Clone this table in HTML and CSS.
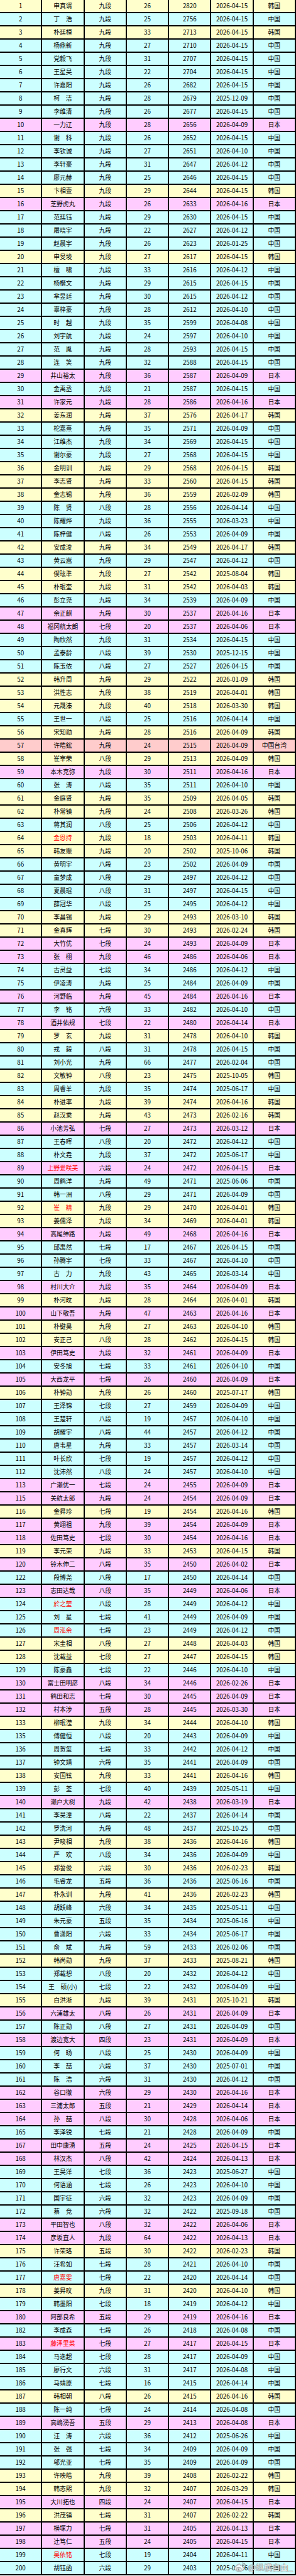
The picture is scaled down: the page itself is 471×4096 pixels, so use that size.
FILE: index.html
```html
<!DOCTYPE html>
<html lang="zh-CN">
<head>
<meta charset="utf-8">
<title>围棋等级分排名</title>
<link rel="stylesheet" href="styles.css">
</head>
<body>
<div class="page">
<table class="rank">
<tbody>
<tr class="k"><td>1</td><td>申真谞</td><td>九段</td><td>26</td><td>2820</td><td>2026-04-15</td><td>韩国</td></tr>
<tr class="c"><td>2</td><td>丁　浩</td><td>九段</td><td>25</td><td>2756</td><td>2026-04-15</td><td>中国</td></tr>
<tr class="k"><td>3</td><td>朴廷桓</td><td>九段</td><td>33</td><td>2713</td><td>2026-04-15</td><td>韩国</td></tr>
<tr class="c"><td>4</td><td>杨鼎新</td><td>九段</td><td>27</td><td>2710</td><td>2026-04-15</td><td>中国</td></tr>
<tr class="c"><td>5</td><td>党毅飞</td><td>九段</td><td>31</td><td>2707</td><td>2026-04-15</td><td>中国</td></tr>
<tr class="c"><td>6</td><td>王星昊</td><td>九段</td><td>22</td><td>2704</td><td>2026-04-15</td><td>中国</td></tr>
<tr class="c"><td>7</td><td>许嘉阳</td><td>九段</td><td>26</td><td>2682</td><td>2026-04-15</td><td>中国</td></tr>
<tr class="c"><td>8</td><td>柯　洁</td><td>九段</td><td>28</td><td>2679</td><td>2025-12-09</td><td>中国</td></tr>
<tr class="c"><td>9</td><td>李维清</td><td>九段</td><td>26</td><td>2677</td><td>2026-04-15</td><td>中国</td></tr>
<tr class="j"><td>10</td><td>一力辽</td><td>九段</td><td>28</td><td>2656</td><td>2026-04-09</td><td>日本</td></tr>
<tr class="c"><td>11</td><td>谢　科</td><td>九段</td><td>26</td><td>2652</td><td>2026-04-15</td><td>中国</td></tr>
<tr class="c"><td>12</td><td>李钦诚</td><td>九段</td><td>27</td><td>2651</td><td>2026-04-10</td><td>中国</td></tr>
<tr class="c"><td>13</td><td>李轩豪</td><td>九段</td><td>31</td><td>2647</td><td>2026-04-12</td><td>中国</td></tr>
<tr class="c"><td>14</td><td>廖元赫</td><td>九段</td><td>25</td><td>2646</td><td>2026-04-15</td><td>中国</td></tr>
<tr class="k"><td>15</td><td>卞相壹</td><td>九段</td><td>29</td><td>2644</td><td>2026-04-15</td><td>韩国</td></tr>
<tr class="j"><td>16</td><td>芝野虎丸</td><td>九段</td><td>26</td><td>2633</td><td>2026-04-16</td><td>日本</td></tr>
<tr class="c"><td>17</td><td>范廷钰</td><td>九段</td><td>29</td><td>2630</td><td>2026-04-15</td><td>中国</td></tr>
<tr class="c"><td>18</td><td>屠晓宇</td><td>九段</td><td>22</td><td>2627</td><td>2026-04-12</td><td>中国</td></tr>
<tr class="c"><td>19</td><td>赵晨宇</td><td>九段</td><td>26</td><td>2623</td><td>2026-01-25</td><td>中国</td></tr>
<tr class="k"><td>20</td><td>申旻埈</td><td>九段</td><td>27</td><td>2617</td><td>2026-04-15</td><td>韩国</td></tr>
<tr class="c"><td>21</td><td>檀　啸</td><td>九段</td><td>33</td><td>2616</td><td>2026-04-12</td><td>中国</td></tr>
<tr class="c"><td>22</td><td>杨楷文</td><td>九段</td><td>29</td><td>2615</td><td>2026-04-15</td><td>中国</td></tr>
<tr class="c"><td>23</td><td>芈昱廷</td><td>九段</td><td>30</td><td>2615</td><td>2026-04-12</td><td>中国</td></tr>
<tr class="c"><td>24</td><td>辜梓豪</td><td>九段</td><td>28</td><td>2612</td><td>2026-04-10</td><td>中国</td></tr>
<tr class="c"><td>25</td><td>时　越</td><td>九段</td><td>35</td><td>2599</td><td>2026-04-08</td><td>中国</td></tr>
<tr class="c"><td>26</td><td>刘宇航</td><td>九段</td><td>24</td><td>2597</td><td>2026-04-10</td><td>中国</td></tr>
<tr class="c"><td>27</td><td>范　胤</td><td>九段</td><td>28</td><td>2593</td><td>2026-04-15</td><td>中国</td></tr>
<tr class="c"><td>28</td><td>连　笑</td><td>九段</td><td>32</td><td>2588</td><td>2026-04-15</td><td>中国</td></tr>
<tr class="j"><td>29</td><td>井山裕太</td><td>九段</td><td>36</td><td>2587</td><td>2026-04-09</td><td>日本</td></tr>
<tr class="c"><td>30</td><td>金禹丞</td><td>九段</td><td>21</td><td>2587</td><td>2026-04-15</td><td>中国</td></tr>
<tr class="j"><td>31</td><td>许家元</td><td>九段</td><td>28</td><td>2586</td><td>2026-04-16</td><td>日本</td></tr>
<tr class="k"><td>32</td><td>姜东润</td><td>九段</td><td>37</td><td>2576</td><td>2026-04-17</td><td>韩国</td></tr>
<tr class="c"><td>33</td><td>柁嘉熹</td><td>九段</td><td>35</td><td>2571</td><td>2026-04-09</td><td>中国</td></tr>
<tr class="c"><td>34</td><td>江维杰</td><td>九段</td><td>34</td><td>2569</td><td>2026-04-15</td><td>中国</td></tr>
<tr class="c"><td>35</td><td>谢尔豪</td><td>九段</td><td>27</td><td>2568</td><td>2026-04-15</td><td>中国</td></tr>
<tr class="k"><td>36</td><td>金明训</td><td>九段</td><td>29</td><td>2568</td><td>2026-04-15</td><td>韩国</td></tr>
<tr class="k"><td>37</td><td>李志贤</td><td>九段</td><td>33</td><td>2560</td><td>2026-04-15</td><td>韩国</td></tr>
<tr class="k"><td>38</td><td>金志锡</td><td>九段</td><td>36</td><td>2559</td><td>2026-02-09</td><td>韩国</td></tr>
<tr class="c"><td>39</td><td>陈　贤</td><td>八段</td><td>28</td><td>2556</td><td>2026-04-14</td><td>中国</td></tr>
<tr class="c"><td>40</td><td>陈耀烨</td><td>九段</td><td>36</td><td>2555</td><td>2026-03-23</td><td>中国</td></tr>
<tr class="c"><td>41</td><td>陈梓健</td><td>八段</td><td>26</td><td>2553</td><td>2026-04-09</td><td>中国</td></tr>
<tr class="k"><td>42</td><td>安成浚</td><td>九段</td><td>34</td><td>2549</td><td>2026-04-17</td><td>韩国</td></tr>
<tr class="c"><td>43</td><td>黄云嵩</td><td>九段</td><td>29</td><td>2547</td><td>2026-04-12</td><td>中国</td></tr>
<tr class="k"><td>44</td><td>偰玹準</td><td>九段</td><td>27</td><td>2542</td><td>2025-08-04</td><td>韩国</td></tr>
<tr class="k"><td>45</td><td>朴珉奎</td><td>九段</td><td>31</td><td>2542</td><td>2026-04-03</td><td>韩国</td></tr>
<tr class="c"><td>46</td><td>彭立尧</td><td>九段</td><td>34</td><td>2539</td><td>2026-04-09</td><td>中国</td></tr>
<tr class="j"><td>47</td><td>余正麒</td><td>九段</td><td>30</td><td>2537</td><td>2026-04-16</td><td>日本</td></tr>
<tr class="j"><td>48</td><td>福冈航太朗</td><td>七段</td><td>20</td><td>2537</td><td>2026-04-06</td><td>日本</td></tr>
<tr class="c"><td>49</td><td>陶欣然</td><td>九段</td><td>31</td><td>2534</td><td>2026-04-15</td><td>中国</td></tr>
<tr class="c"><td>50</td><td>孟泰龄</td><td>八段</td><td>39</td><td>2530</td><td>2025-12-15</td><td>中国</td></tr>
<tr class="c"><td>51</td><td>陈玉侬</td><td>八段</td><td>27</td><td>2527</td><td>2026-04-15</td><td>中国</td></tr>
<tr class="k"><td>52</td><td>韩升周</td><td>九段</td><td>29</td><td>2522</td><td>2026-01-09</td><td>韩国</td></tr>
<tr class="k"><td>53</td><td>洪性志</td><td>九段</td><td>38</td><td>2519</td><td>2026-04-01</td><td>韩国</td></tr>
<tr class="k"><td>54</td><td>元晟溱</td><td>九段</td><td>40</td><td>2518</td><td>2026-03-30</td><td>韩国</td></tr>
<tr class="c"><td>55</td><td>王世一</td><td>八段</td><td>25</td><td>2516</td><td>2026-04-14</td><td>中国</td></tr>
<tr class="k"><td>56</td><td>宋知勋</td><td>九段</td><td>28</td><td>2516</td><td>2026-04-09</td><td>韩国</td></tr>
<tr class="t"><td>57</td><td>许皓鋐</td><td>九段</td><td>24</td><td>2515</td><td>2026-04-09</td><td>中国台湾</td></tr>
<tr class="k"><td>58</td><td>崔宰荣</td><td>八段</td><td>29</td><td>2513</td><td>2026-04-09</td><td>韩国</td></tr>
<tr class="j"><td>59</td><td>本木克弥</td><td>九段</td><td>30</td><td>2511</td><td>2026-04-16</td><td>日本</td></tr>
<tr class="c"><td>60</td><td>张　涛</td><td>八段</td><td>35</td><td>2511</td><td>2026-04-10</td><td>中国</td></tr>
<tr class="k"><td>61</td><td>金庭贤</td><td>九段</td><td>35</td><td>2509</td><td>2026-04-05</td><td>韩国</td></tr>
<tr class="k"><td>62</td><td>朴常镇</td><td>九段</td><td>24</td><td>2508</td><td>2026-03-26</td><td>韩国</td></tr>
<tr class="c"><td>63</td><td>蒋其润</td><td>八段</td><td>25</td><td>2506</td><td>2026-04-12</td><td>中国</td></tr>
<tr class="k"><td>64</td><td class="w">金恩持</td><td>九段</td><td>18</td><td>2503</td><td>2026-04-11</td><td>韩国</td></tr>
<tr class="k"><td>65</td><td>韩友赈</td><td>九段</td><td>20</td><td>2502</td><td>2025-10-06</td><td>韩国</td></tr>
<tr class="c"><td>66</td><td>黄明宇</td><td>八段</td><td>23</td><td>2502</td><td>2026-04-09</td><td>中国</td></tr>
<tr class="c"><td>67</td><td>童梦成</td><td>八段</td><td>29</td><td>2497</td><td>2026-04-12</td><td>中国</td></tr>
<tr class="c"><td>68</td><td>夏晨琨</td><td>八段</td><td>31</td><td>2497</td><td>2026-04-15</td><td>中国</td></tr>
<tr class="c"><td>69</td><td>薛冠华</td><td>八段</td><td>25</td><td>2495</td><td>2026-04-12</td><td>中国</td></tr>
<tr class="k"><td>70</td><td>李昌锡</td><td>九段</td><td>29</td><td>2493</td><td>2026-03-10</td><td>韩国</td></tr>
<tr class="k"><td>71</td><td>金真辉</td><td>七段</td><td>30</td><td>2493</td><td>2026-02-24</td><td>韩国</td></tr>
<tr class="j"><td>72</td><td>大竹优</td><td>七段</td><td>24</td><td>2493</td><td>2026-04-09</td><td>日本</td></tr>
<tr class="j"><td>73</td><td>张　栩</td><td>九段</td><td>46</td><td>2486</td><td>2026-04-06</td><td>日本</td></tr>
<tr class="c"><td>74</td><td>古灵益</td><td>七段</td><td>34</td><td>2486</td><td>2026-04-12</td><td>中国</td></tr>
<tr class="c"><td>75</td><td>伊凌涛</td><td>九段</td><td>25</td><td>2484</td><td>2026-04-09</td><td>中国</td></tr>
<tr class="j"><td>76</td><td>河野临</td><td>九段</td><td>45</td><td>2484</td><td>2026-04-16</td><td>日本</td></tr>
<tr class="c"><td>77</td><td>李　铭</td><td>六段</td><td>33</td><td>2482</td><td>2026-04-10</td><td>中国</td></tr>
<tr class="j"><td>78</td><td>酒井佑规</td><td>七段</td><td>22</td><td>2480</td><td>2026-04-14</td><td>日本</td></tr>
<tr class="k"><td>79</td><td>罗　玄</td><td>九段</td><td>31</td><td>2478</td><td>2026-04-10</td><td>韩国</td></tr>
<tr class="c"><td>80</td><td>戎　毅</td><td>八段</td><td>31</td><td>2478</td><td>2026-04-15</td><td>中国</td></tr>
<tr class="c"><td>81</td><td>刘小光</td><td>九段</td><td>66</td><td>2477</td><td>2026-02-04</td><td>中国</td></tr>
<tr class="k"><td>82</td><td>文敏钟</td><td>八段</td><td>23</td><td>2475</td><td>2025-10-05</td><td>韩国</td></tr>
<tr class="c"><td>83</td><td>周睿羊</td><td>九段</td><td>35</td><td>2474</td><td>2025-06-17</td><td>中国</td></tr>
<tr class="k"><td>84</td><td>朴进率</td><td>九段</td><td>39</td><td>2474</td><td>2026-04-16</td><td>韩国</td></tr>
<tr class="k"><td>85</td><td>赵汉乘</td><td>九段</td><td>43</td><td>2473</td><td>2026-02-16</td><td>韩国</td></tr>
<tr class="j"><td>86</td><td>小池芳弘</td><td>七段</td><td>27</td><td>2473</td><td>2026-03-12</td><td>日本</td></tr>
<tr class="c"><td>87</td><td>王春晖</td><td>八段</td><td>20</td><td>2472</td><td>2026-04-12</td><td>中国</td></tr>
<tr class="c"><td>88</td><td>朴文垚</td><td>九段</td><td>37</td><td>2472</td><td>2025-06-17</td><td>中国</td></tr>
<tr class="j"><td>89</td><td class="w">上野爱咲美</td><td>六段</td><td>24</td><td>2472</td><td>2026-04-15</td><td>日本</td></tr>
<tr class="c"><td>90</td><td>周鹤洋</td><td>九段</td><td>49</td><td>2471</td><td>2025-06-06</td><td>中国</td></tr>
<tr class="c"><td>91</td><td>韩一洲</td><td>八段</td><td>29</td><td>2471</td><td>2026-04-09</td><td>中国</td></tr>
<tr class="k"><td>92</td><td class="w">崔　精</td><td>九段</td><td>29</td><td>2470</td><td>2026-04-01</td><td>韩国</td></tr>
<tr class="k"><td>93</td><td>姜儒泽</td><td>九段</td><td>34</td><td>2469</td><td>2026-04-01</td><td>韩国</td></tr>
<tr class="j"><td>94</td><td>高尾绅路</td><td>九段</td><td>49</td><td>2468</td><td>2026-04-16</td><td>日本</td></tr>
<tr class="c"><td>95</td><td>邱禹然</td><td>七段</td><td>17</td><td>2467</td><td>2026-04-15</td><td>中国</td></tr>
<tr class="c"><td>96</td><td>孙腾宇</td><td>七段</td><td>33</td><td>2467</td><td>2026-04-10</td><td>中国</td></tr>
<tr class="c"><td>97</td><td>古　力</td><td>九段</td><td>43</td><td>2465</td><td>2026-03-14</td><td>中国</td></tr>
<tr class="j"><td>98</td><td>村川大介</td><td>九段</td><td>35</td><td>2464</td><td>2026-04-09</td><td>日本</td></tr>
<tr class="k"><td>99</td><td>朴河旼</td><td>九段</td><td>28</td><td>2464</td><td>2026-04-01</td><td>韩国</td></tr>
<tr class="j"><td>100</td><td>山下敬吾</td><td>九段</td><td>47</td><td>2463</td><td>2026-04-16</td><td>日本</td></tr>
<tr class="k"><td>101</td><td>朴键昊</td><td>九段</td><td>27</td><td>2463</td><td>2026-04-10</td><td>韩国</td></tr>
<tr class="k"><td>102</td><td>安正己</td><td>八段</td><td>28</td><td>2462</td><td>2026-04-15</td><td>韩国</td></tr>
<tr class="j"><td>103</td><td>伊田笃史</td><td>九段</td><td>32</td><td>2461</td><td>2026-04-09</td><td>日本</td></tr>
<tr class="c"><td>104</td><td>安冬旭</td><td>七段</td><td>33</td><td>2461</td><td>2026-04-10</td><td>中国</td></tr>
<tr class="j"><td>105</td><td>大西龙平</td><td>七段</td><td>26</td><td>2460</td><td>2026-04-09</td><td>日本</td></tr>
<tr class="k"><td>106</td><td>朴钟勋</td><td>九段</td><td>26</td><td>2460</td><td>2025-07-17</td><td>韩国</td></tr>
<tr class="c"><td>107</td><td>王泽锦</td><td>七段</td><td>27</td><td>2459</td><td>2026-04-09</td><td>中国</td></tr>
<tr class="c"><td>108</td><td>王楚轩</td><td>八段</td><td>19</td><td>2457</td><td>2026-04-10</td><td>中国</td></tr>
<tr class="c"><td>109</td><td>胡耀宇</td><td>八段</td><td>44</td><td>2457</td><td>2026-04-12</td><td>中国</td></tr>
<tr class="c"><td>110</td><td>唐韦星</td><td>九段</td><td>33</td><td>2457</td><td>2026-03-14</td><td>中国</td></tr>
<tr class="c"><td>111</td><td>叶长欣</td><td>七段</td><td>19</td><td>2457</td><td>2026-04-12</td><td>中国</td></tr>
<tr class="c"><td>112</td><td>沈沛然</td><td>八段</td><td>24</td><td>2457</td><td>2026-04-10</td><td>中国</td></tr>
<tr class="j"><td>113</td><td>广濑优一</td><td>七段</td><td>24</td><td>2455</td><td>2026-04-09</td><td>日本</td></tr>
<tr class="j"><td>115</td><td>关航太郎</td><td>九段</td><td>24</td><td>2454</td><td>2026-04-09</td><td>日本</td></tr>
<tr class="k"><td>116</td><td>金昇珍</td><td>七段</td><td>19</td><td>2454</td><td>2026-04-16</td><td>韩国</td></tr>
<tr class="j"><td>117</td><td>黄翊祖</td><td>九段</td><td>39</td><td>2454</td><td>2026-04-09</td><td>日本</td></tr>
<tr class="j"><td>118</td><td>佐田笃史</td><td>七段</td><td>30</td><td>2454</td><td>2026-04-16</td><td>日本</td></tr>
<tr class="k"><td>119</td><td>李元荣</td><td>九段</td><td>33</td><td>2453</td><td>2026-04-15</td><td>韩国</td></tr>
<tr class="j"><td>120</td><td>铃木伸二</td><td>八段</td><td>35</td><td>2450</td><td>2026-04-02</td><td>日本</td></tr>
<tr class="c"><td>122</td><td>段博尧</td><td>八段</td><td>17</td><td>2450</td><td>2026-04-14</td><td>中国</td></tr>
<tr class="j"><td>123</td><td>志田达哉</td><td>八段</td><td>35</td><td>2449</td><td>2026-04-06</td><td>日本</td></tr>
<tr class="c"><td>124</td><td class="w">於之莹</td><td>八段</td><td>28</td><td>2449</td><td>2026-04-12</td><td>中国</td></tr>
<tr class="c"><td>125</td><td>刘　星</td><td>七段</td><td>41</td><td>2449</td><td>2026-04-09</td><td>中国</td></tr>
<tr class="c"><td>126</td><td class="w">周泓余</td><td>七段</td><td>23</td><td>2449</td><td>2026-04-12</td><td>中国</td></tr>
<tr class="k"><td>127</td><td>宋圭相</td><td>八段</td><td>27</td><td>2448</td><td>2026-04-03</td><td>韩国</td></tr>
<tr class="k"><td>128</td><td>沈载益</td><td>七段</td><td>27</td><td>2447</td><td>2026-04-15</td><td>韩国</td></tr>
<tr class="c"><td>129</td><td>陈豪鑫</td><td>七段</td><td>22</td><td>2446</td><td>2026-04-10</td><td>中国</td></tr>
<tr class="j"><td>130</td><td>富士田明彦</td><td>八段</td><td>34</td><td>2446</td><td>2026-02-26</td><td>日本</td></tr>
<tr class="j"><td>131</td><td>鹤田和志</td><td>七段</td><td>30</td><td>2445</td><td>2026-04-09</td><td>日本</td></tr>
<tr class="j"><td>132</td><td>村本涉</td><td>五段</td><td>28</td><td>2445</td><td>2026-03-30</td><td>日本</td></tr>
<tr class="k"><td>133</td><td>柳珉滢</td><td>九段</td><td>34</td><td>2444</td><td>2026-04-10</td><td>韩国</td></tr>
<tr class="c"><td>135</td><td>傅健恒</td><td>八段</td><td>20</td><td>2443</td><td>2026-04-09</td><td>中国</td></tr>
<tr class="c"><td>136</td><td>周贺玺</td><td>七段</td><td>33</td><td>2442</td><td>2026-04-12</td><td>中国</td></tr>
<tr class="c"><td>137</td><td>钟文靖</td><td>六段</td><td>35</td><td>2441</td><td>2026-04-09</td><td>中国</td></tr>
<tr class="k"><td>138</td><td>安国铉</td><td>九段</td><td>33</td><td>2441</td><td>2026-04-16</td><td>韩国</td></tr>
<tr class="c"><td>139</td><td>彭　荃</td><td>七段</td><td>40</td><td>2439</td><td>2025-05-11</td><td>中国</td></tr>
<tr class="j"><td>140</td><td>濑户大树</td><td>九段</td><td>42</td><td>2438</td><td>2026-03-19</td><td>日本</td></tr>
<tr class="c"><td>141</td><td>李昊潼</td><td>八段</td><td>22</td><td>2437</td><td>2026-04-14</td><td>中国</td></tr>
<tr class="c"><td>142</td><td>罗洗河</td><td>九段</td><td>48</td><td>2437</td><td>2025-10-25</td><td>中国</td></tr>
<tr class="k"><td>143</td><td>尹畯相</td><td>九段</td><td>38</td><td>2436</td><td>2026-04-16</td><td>韩国</td></tr>
<tr class="c"><td>144</td><td>严　欢</td><td>八段</td><td>34</td><td>2436</td><td>2026-04-09</td><td>中国</td></tr>
<tr class="k"><td>145</td><td>郑誓俊</td><td>六段</td><td>30</td><td>2436</td><td>2026-02-23</td><td>韩国</td></tr>
<tr class="c"><td>146</td><td>毛睿龙</td><td>五段</td><td>36</td><td>2436</td><td>2025-06-16</td><td>中国</td></tr>
<tr class="k"><td>147</td><td>朴永训</td><td>九段</td><td>41</td><td>2436</td><td>2026-02-23</td><td>韩国</td></tr>
<tr class="c"><td>148</td><td>胡跃峰</td><td>六段</td><td>34</td><td>2435</td><td>2025-05-11</td><td>中国</td></tr>
<tr class="c"><td>149</td><td>朱元豪</td><td>五段</td><td>35</td><td>2434</td><td>2025-06-16</td><td>中国</td></tr>
<tr class="c"><td>150</td><td>曹潇阳</td><td>六段</td><td>33</td><td>2434</td><td>2025-06-17</td><td>中国</td></tr>
<tr class="c"><td>151</td><td>俞　斌</td><td>九段</td><td>59</td><td>2433</td><td>2026-02-06</td><td>中国</td></tr>
<tr class="k"><td>152</td><td>韩尚勋</td><td>九段</td><td>37</td><td>2433</td><td>2025-08-21</td><td>韩国</td></tr>
<tr class="c"><td>153</td><td>郑载想</td><td>八段</td><td>20</td><td>2432</td><td>2026-04-12</td><td>中国</td></tr>
<tr class="c"><td>154</td><td>王　硕(小)</td><td>七段</td><td>22</td><td>2432</td><td>2026-04-09</td><td>中国</td></tr>
<tr class="k"><td>155</td><td>白洪淅</td><td>九段</td><td>39</td><td>2431</td><td>2025-10-21</td><td>韩国</td></tr>
<tr class="j"><td>156</td><td>六浦雄太</td><td>八段</td><td>26</td><td>2431</td><td>2026-04-09</td><td>日本</td></tr>
<tr class="c"><td>157</td><td>陈正勋</td><td>八段</td><td>27</td><td>2431</td><td>2026-04-09</td><td>中国</td></tr>
<tr class="j"><td>158</td><td>渡边宽大</td><td>四段</td><td>23</td><td>2431</td><td>2026-04-09</td><td>日本</td></tr>
<tr class="c"><td>159</td><td>何　旸</td><td>八段</td><td>25</td><td>2430</td><td>2026-04-09</td><td>中国</td></tr>
<tr class="c"><td>160</td><td>李　喆</td><td>六段</td><td>37</td><td>2430</td><td>2025-07-01</td><td>中国</td></tr>
<tr class="c"><td>161</td><td>陈　浩</td><td>六段</td><td>31</td><td>2430</td><td>2026-04-12</td><td>中国</td></tr>
<tr class="j"><td>162</td><td>谷口徹</td><td>六段</td><td>29</td><td>2430</td><td>2026-04-16</td><td>日本</td></tr>
<tr class="j"><td>163</td><td>三浦太郎</td><td>五段</td><td>21</td><td>2429</td><td>2026-04-14</td><td>日本</td></tr>
<tr class="j"><td>164</td><td>孙　喆</td><td>八段</td><td>30</td><td>2428</td><td>2026-04-06</td><td>日本</td></tr>
<tr class="c"><td>165</td><td>李泽锐</td><td>七段</td><td>21</td><td>2428</td><td>2026-04-09</td><td>中国</td></tr>
<tr class="j"><td>167</td><td>田中康湧</td><td>五段</td><td>24</td><td>2425</td><td>2026-04-15</td><td>日本</td></tr>
<tr class="j"><td>168</td><td>林汉杰</td><td>八段</td><td>42</td><td>2424</td><td>2026-04-13</td><td>日本</td></tr>
<tr class="c"><td>169</td><td>王昊洋</td><td>七段</td><td>36</td><td>2423</td><td>2025-06-27</td><td>中国</td></tr>
<tr class="c"><td>170</td><td>何语涵</td><td>七段</td><td>26</td><td>2423</td><td>2026-04-10</td><td>中国</td></tr>
<tr class="c"><td>171</td><td>国宇征</td><td>六段</td><td>32</td><td>2423</td><td>2026-04-09</td><td>中国</td></tr>
<tr class="c"><td>172</td><td>蔡　竞</td><td>六段</td><td>32</td><td>2422</td><td>2025-09-18</td><td>中国</td></tr>
<tr class="j"><td>173</td><td>平田智也</td><td>八段</td><td>32</td><td>2422</td><td>2026-04-06</td><td>日本</td></tr>
<tr class="j"><td>174</td><td>彦坂直人</td><td>九段</td><td>64</td><td>2422</td><td>2026-04-13</td><td>日本</td></tr>
<tr class="k"><td>175</td><td>许荣珞</td><td>五段</td><td>30</td><td>2422</td><td>2026-02-23</td><td>韩国</td></tr>
<tr class="c"><td>176</td><td>汪希如</td><td>七段</td><td>28</td><td>2421</td><td>2026-04-10</td><td>中国</td></tr>
<tr class="c"><td>177</td><td class="w">唐嘉雯</td><td>七段</td><td>22</td><td>2420</td><td>2026-04-14</td><td>中国</td></tr>
<tr class="k"><td>178</td><td>姜昇旼</td><td>九段</td><td>31</td><td>2420</td><td>2026-04-10</td><td>韩国</td></tr>
<tr class="c"><td>179</td><td>韩墨阳</td><td>七段</td><td>18</td><td>2419</td><td>2026-04-12</td><td>中国</td></tr>
<tr class="j"><td>180</td><td>阿部良希</td><td>五段</td><td>29</td><td>2419</td><td>2026-04-16</td><td>日本</td></tr>
<tr class="c"><td>182</td><td>李成森</td><td>七段</td><td>26</td><td>2418</td><td>2026-04-08</td><td>中国</td></tr>
<tr class="j"><td>183</td><td class="w">藤泽里菜</td><td>七段</td><td>27</td><td>2417</td><td>2026-04-15</td><td>日本</td></tr>
<tr class="c"><td>184</td><td>马逸超</td><td>七段</td><td>28</td><td>2417</td><td>2026-04-09</td><td>中国</td></tr>
<tr class="c"><td>185</td><td>廖行文</td><td>六段</td><td>31</td><td>2417</td><td>2026-04-08</td><td>中国</td></tr>
<tr class="c"><td>186</td><td>马靖原</td><td>七段</td><td>16</td><td>2415</td><td>2026-04-14</td><td>中国</td></tr>
<tr class="k"><td>187</td><td>韩相朝</td><td>八段</td><td>26</td><td>2415</td><td>2026-04-16</td><td>韩国</td></tr>
<tr class="c"><td>188</td><td>陈一纯</td><td>七段</td><td>24</td><td>2414</td><td>2026-04-08</td><td>中国</td></tr>
<tr class="j"><td>189</td><td>高嶋湧吾</td><td>五段</td><td>29</td><td>2413</td><td>2026-04-08</td><td>日本</td></tr>
<tr class="c"><td>190</td><td>汪　涛</td><td>六段</td><td>36</td><td>2412</td><td>2025-06-26</td><td>中国</td></tr>
<tr class="c"><td>191</td><td>张　强</td><td>七段</td><td>34</td><td>2409</td><td>2026-04-09</td><td>中国</td></tr>
<tr class="c"><td>192</td><td>邬光亚</td><td>七段</td><td>35</td><td>2409</td><td>2026-04-09</td><td>中国</td></tr>
<tr class="k"><td>193</td><td>许映皓</td><td>九段</td><td>39</td><td>2408</td><td>2026-02-22</td><td>韩国</td></tr>
<tr class="k"><td>194</td><td>韩态熙</td><td>九段</td><td>32</td><td>2407</td><td>2026-03-29</td><td>韩国</td></tr>
<tr class="j"><td>195</td><td>大川拓也</td><td>四段</td><td>24</td><td>2407</td><td>2026-04-15</td><td>日本</td></tr>
<tr class="k"><td>196</td><td>洪茂镇</td><td>七段</td><td>31</td><td>2407</td><td>2026-02-22</td><td>韩国</td></tr>
<tr class="j"><td>197</td><td>横塚力</td><td>七段</td><td>31</td><td>2405</td><td>2026-04-13</td><td>日本</td></tr>
<tr class="j"><td>198</td><td>辻笃仁</td><td>五段</td><td>24</td><td>2405</td><td>2026-04-15</td><td>日本</td></tr>
<tr class="c"><td>199</td><td class="w">吴依铭</td><td>七段</td><td>19</td><td>2404</td><td>2026-04-11</td><td>中国</td></tr>
<tr class="c"><td>200</td><td>胡钰函</td><td>六段</td><td>29</td><td>2403</td><td>2025-06-16</td><td>中国</td></tr>
</tbody>
</table>
<div class="mark">
<svg class="mark-logo" width="20" height="17" viewBox="0 0 24 20" aria-hidden="true">
<path d="M10 4.5C5.5 5.5 1.2 10 2 14c.8 4 6.5 5.2 11 4.3 4.6-.9 7.6-4 6-6.8-.7-1.2-2.3-1.2-2.4-1.9.6-2.6-1.4-3.8-4.4-2.3.3-1.9-.4-3.2-2.2-2.8z" fill="rgba(255,255,255,0.8)" stroke="#8a8a8a" stroke-width="1"/>
<ellipse cx="10" cy="14.2" rx="4.6" ry="3" fill="none" stroke="#8a8a8a" stroke-width="1"/>
<circle cx="9.4" cy="14.6" r="1.3" fill="#8a8a8a"/>
<path d="M16.5 2.5a5.5 5.5 0 0 1 5.5 5.5" fill="none" stroke="#8a8a8a" stroke-width="1.6" stroke-linecap="round"/>
<path d="M16.5 5.5a2.5 2.5 0 0 1 2.5 2.5" fill="none" stroke="#8a8a8a" stroke-width="1.4" stroke-linecap="round"/>
</svg>
<span class="mark-text">@纵横自由_</span>
</div>
</div>
</body>
</html>
```

FILE: styles.css
```css
html, body {
  margin: 0;
  padding: 0;
  background: #ffffff;
}

body {
  font-family: "Noto Sans CJK SC", "Noto Sans", sans-serif;
  color: #000;
}

.page {
  position: relative;
  width: 471px;
}

.rank {
  display: grid;
  grid-template-columns: repeat(7, 1fr);
  column-gap: 2px;
  row-gap: 2px;
  padding: 0 2px 2px 0;
  background: #000;
  width: 471px;
  box-sizing: border-box;
  border: 0;
}

.rank tbody,
.rank tr {
  display: contents;
}

.rank td {
  height: 19px;
  padding: 0;
  display: flex;
  align-items: center;
  justify-content: center;
  font-size: 9.8px;
  line-height: 1;
  white-space: nowrap;
  color: #000;
}

.k td { background: #ffffcc; }
.c td { background: #ccffff; }
.j td { background: #ffccff; }
.t td { background: #ffcccc; }

.rank td.w { color: #ff0000; }

.mark {
  position: absolute;
  right: 5px;
  bottom: 4px;
  display: flex;
  align-items: center;
  gap: 2px;
  pointer-events: none;
}

.mark-text {
  font-size: 13px;
  color: rgba(255, 255, 255, 0.85);
  text-shadow: 0 0 1px #777, 0 0 1px #777, 0 0 1px #777;
  letter-spacing: 0;
}
```
